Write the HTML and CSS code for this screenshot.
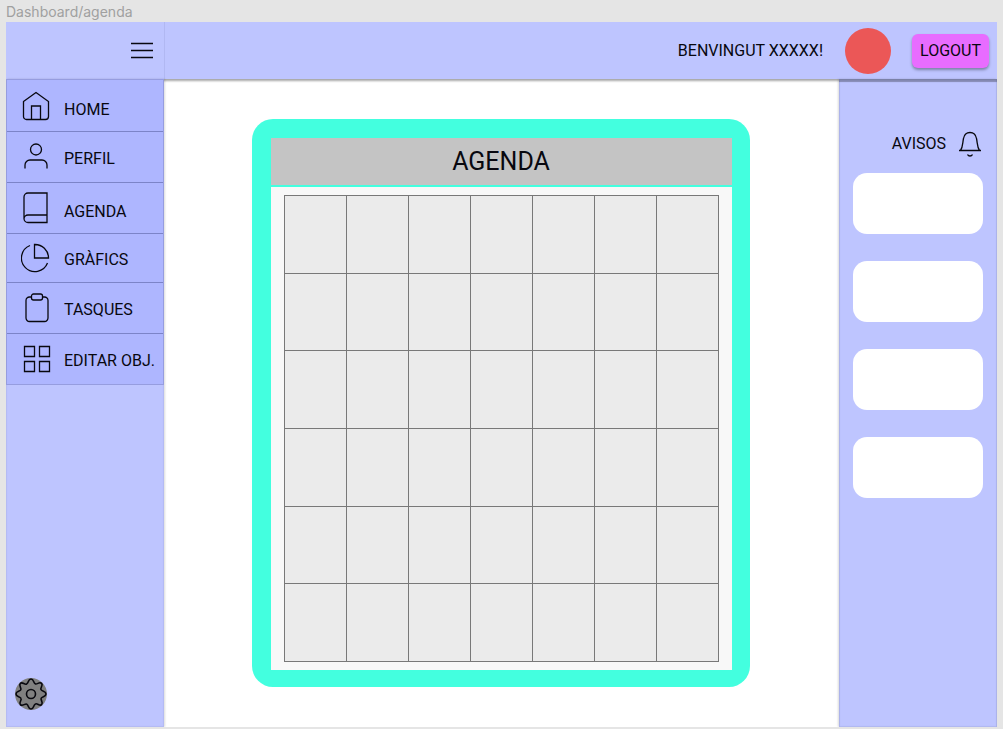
FILE: index.html
```html
<!DOCTYPE html>
<html lang="ca">
<head>
<meta charset="utf-8">
<meta name="viewport" content="width=device-width, initial-scale=1">
<title>Dashboard/agenda</title>
<link rel="stylesheet" href="styles.css">
</head>
<body>
<div class="frame-title">Dashboard/agenda</div>
<div class="frame">
  <header class="topbar">
    <div class="topbar-menu">
      <button class="icon-button" type="button" aria-label="Menú">
        <svg width="22" height="18" viewBox="0 0 22 18"><path d="M0 1.5h22M0 8.5h22M0 15.5h22"/></svg>
      </button>
    </div>
    <div class="topbar-user">
      <span class="welcome">BENVINGUT XXXXX!</span>
      <span class="avatar"></span>
      <button class="logout" type="button">LOGOUT</button>
    </div>
  </header>
  <div class="columns">
    <aside class="sidebar">
      <nav class="nav">
        <a class="nav-item nav-item-low" href="#"><svg width="30" height="30" viewBox="0 0 30 30"><path d="M2.500 10.500 15 1.500 27.500 10.500V25.500a3 3 0 0 1-3 3H5.500a3 3 0 0 1-3-3ZM10.500 28.500V15h9v13.500"/></svg><span>HOME</span></a>
        <a class="nav-item" href="#"><svg width="30" height="30" viewBox="0 0 30 30"><circle cx="15" cy="7.500" r="5.500"/><path d="M4 26.500V23a5 5 0 0 1 5-5h12a5 5 0 0 1 5 5v3.500"/></svg><span>PERFIL</span></a>
        <a class="nav-item nav-item-low" href="#"><svg width="30" height="32" viewBox="0 0 30 32"><path d="M7 1h19v29.500H7a4 4 0 0 1-4-4V5a4 4 0 0 1 4-4ZM3 27a4 4 0 0 1 4-4H26"/></svg><span>AGENDA</span></a>
        <a class="nav-item nav-item-short" href="#"><svg width="30" height="30" viewBox="0 0 30 30"><path d="M9 2.500A13.500 13.500 0 1 0 26.500 20M13.500 1.500A13.500 13.500 0 0 1 27.500 15H13.500Z"/></svg><span>GRÀFICS</span></a>
        <a class="nav-item" href="#"><svg width="30" height="30" viewBox="0 0 30 30"><path d="M10.500 4h-2A3.500 3.500 0 0 0 5 7.500v17.500a3.500 3.500 0 0 0 3.500 3.500h15a3.500 3.500 0 0 0 3.500-3.500V7.500A3.500 3.500 0 0 0 23.500 4h-2"/><rect x="10.500" y="1" width="11" height="6" rx="2"/></svg><span>TASQUES</span></a>
        <a class="nav-item" href="#"><svg width="30" height="30" viewBox="0 0 30 30"><path d="M3.500 2.500h10v10h-10ZM18.500 2.500h10v10h-10ZM3.500 17.500h10v10h-10ZM18.500 17.500h10v10h-10Z"/></svg><span>EDITAR OBJ.</span></a>
      </nav>
      <button class="settings" type="button" aria-label="Configuració">
        <svg width="32" height="32" viewBox="0 0 32 32">
          <defs><path id="cog-quarter" d="M16 1C19 1 18.200 5 20.200 5.840C22.200 6.700 24.500 3.300 26.600 5.400C28.700 7.500 24.500 9.800 26.160 11.800C27 13.800 31 13 31 16"/></defs>
          <use href="#cog-quarter"/>
          <use href="#cog-quarter" transform="rotate(90 16 16)"/>
          <use href="#cog-quarter" transform="rotate(180 16 16)"/>
          <use href="#cog-quarter" transform="rotate(270 16 16)"/>
          <circle cx="16" cy="16" r="4.500"/>
        </svg>
      </button>
    </aside>
    <main class="content">
      <section class="agenda">
        <h1 class="agenda-title">AGENDA</h1>
        <div class="agenda-body">
          <table class="calendar" aria-label="Agenda">
            <tbody>
              <tr><td></td><td></td><td></td><td></td><td></td><td></td><td></td></tr>
              <tr><td></td><td></td><td></td><td></td><td></td><td></td><td></td></tr>
              <tr><td></td><td></td><td></td><td></td><td></td><td></td><td></td></tr>
              <tr><td></td><td></td><td></td><td></td><td></td><td></td><td></td></tr>
              <tr><td></td><td></td><td></td><td></td><td></td><td></td><td></td></tr>
              <tr><td></td><td></td><td></td><td></td><td></td><td></td><td></td></tr>
            </tbody>
          </table>
        </div>
      </section>
    </main>
    <aside class="notices">
      <h2 class="notices-title">AVISOS
        <svg width="24" height="28" viewBox="0 0 24 28"><path d="M1 20.500h22M2.500 20.500C5 17 4.500 13 5.500 8.500C7 0.500 17 0.500 18.500 8.500C19.500 13 19 17 21.500 20.500M9.500 24.500c1 2 4 2 5 0"/></svg>
      </h2>
      <div class="notice"></div>
      <div class="notice"></div>
      <div class="notice"></div>
      <div class="notice"></div>
    </aside>
  </div>
</div>
</body>
</html>
```
FILE: styles.css
```css
* { box-sizing: border-box; }

body {
  margin: 0;
  min-height: 100vh;
  padding: 0 6px 2px;
  display: flex;
  flex-direction: column;
  background: #e5e5e5;
  color: #08080f;
  font: 16px/20px Roboto, sans-serif;
}

svg {
  display: block;
  flex: none;
  fill: none;
  stroke: #08080f;
  stroke-width: 1.3;
}

button {
  padding: 0;
  border: 0;
  background: none;
  color: inherit;
  font: inherit;
  cursor: pointer;
}

h1, h2 { margin: 0; font-weight: 400; }

.frame-title {
  height: 22px;
  padding-top: 2px;
  color: #a0a0a0;
  font: 14px/20px Inter, sans-serif;
}

.frame {
  flex: 1;
  display: flex;
  flex-direction: column;
  overflow: hidden;
  background: #fff;
}

.topbar {
  display: flex;
  height: 57px;
  background: #bec5ff;
  box-shadow: 0 2px 2px rgba(0, 0, 0, 0.35);
}

.topbar-menu {
  width: 159px;
  padding-right: 11px;
  display: flex;
  align-items: center;
  justify-content: flex-end;
  border-right: 1px solid #b1b8f2;
}

.topbar-user {
  flex: 1;
  padding-right: 8px;
  display: flex;
  align-items: center;
  justify-content: flex-end;
}

.welcome { margin-right: 22px; }

.avatar {
  width: 46px;
  height: 46px;
  margin-right: 21px;
  border-radius: 50%;
  background: #eb5757;
}

.logout {
  width: 77px;
  height: 34px;
  border-radius: 6px;
  background: #e86cff;
  box-shadow: 0 2px 3px rgba(0, 0, 0, 0.35);
}

.columns { flex: 1; display: flex; }

.sidebar {
  position: relative;
  z-index: 1;
  width: 158px;
  display: flex;
  flex-direction: column;
  justify-content: space-between;
  background: #bec5ff;
  box-shadow: inset 0 0 1px 1px #b3baf2, 1px 0 2px rgba(0, 0, 0, 0.15);
}

.nav {
  border: 1px solid #969ddf;
  border-bottom: 0;
}

.nav-item {
  height: 51px;
  padding-left: 14px;
  display: flex;
  align-items: center;
  gap: 13px;
  border-bottom: 1px solid #7c84c8;
  background: #aeb6ff;
  color: inherit;
  text-decoration: none;
  white-space: nowrap;
}

.nav-item:first-child { height: 52px; }
.nav-item:last-child { border-color: #969ddf; }
.nav-item-short { height: 49px; }
.nav-item span { padding-top: 3px; }
.nav-item-low span { padding-top: 8px; }

.settings {
  width: 32px;
  height: 32px;
  margin: 0 0 17px 9px;
  border-radius: 50%;
  background: #808080;
}

.settings svg { stroke-width: 1.6; }

.content {
  flex: 1;
  padding: 40px 18px 16px 16px;
  display: flex;
  justify-content: center;
  align-items: flex-start;
}

.agenda {
  width: 100%;
  max-width: 498px;
  padding: 19px 18px 17px 19px;
  border-radius: 21px;
  background: #43ffdf;
}

.agenda-title {
  margin-bottom: 2px;
  background: #c4c4c4;
  font-size: 25px;
  line-height: 47px;
  text-align: center;
}

.agenda-body {
  padding: 8px 13px;
  background: #f8f8f8;
}

.calendar {
  width: 100%;
  height: 467px;
  border-collapse: collapse;
  table-layout: fixed;
  background: #ebebeb;
}

.calendar td {
  padding: 0;
  border: 1px solid #787878;
}

.notices {
  width: 158px;
  padding: 51px 14px 14px;
  background: #bec5ff;
  box-shadow: inset 0 3px 1px rgba(0, 0, 0, 0.3), inset 0 0 1px 1px #b0b7f0, -1px 0 2px rgba(0, 0, 0, 0.15);
}

.notices-title {
  height: 28px;
  margin-bottom: 15px;
  padding-right: 1px;
  display: flex;
  align-items: center;
  justify-content: flex-end;
  gap: 12px;
  font-size: 16px;
}

.notice {
  height: 61px;
  margin-bottom: 27px;
  border-radius: 14px;
  background: #fff;
}
```
